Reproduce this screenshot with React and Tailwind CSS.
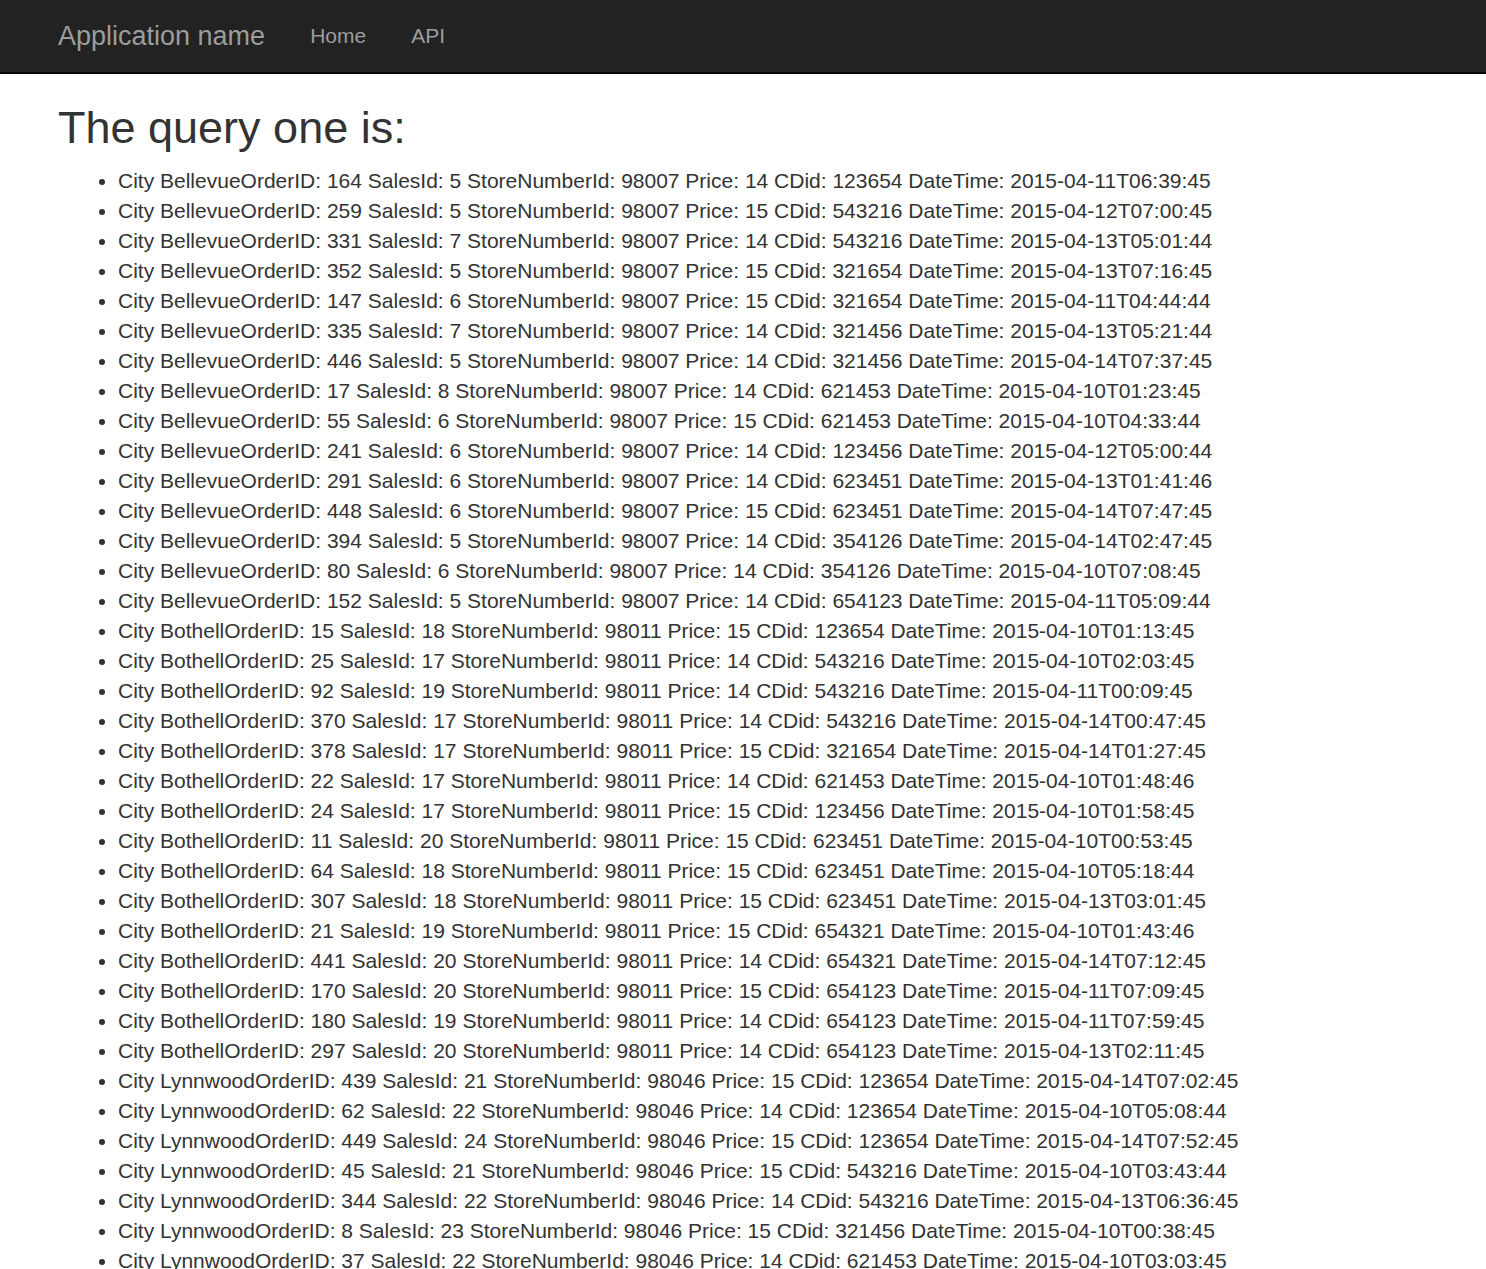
const rows = [
  ['Bellevue', 164, 5, 98007, 14, 123654, '2015-04-11T06:39:45'],
  ['Bellevue', 259, 5, 98007, 15, 543216, '2015-04-12T07:00:45'],
  ['Bellevue', 331, 7, 98007, 14, 543216, '2015-04-13T05:01:44'],
  ['Bellevue', 352, 5, 98007, 15, 321654, '2015-04-13T07:16:45'],
  ['Bellevue', 147, 6, 98007, 15, 321654, '2015-04-11T04:44:44'],
  ['Bellevue', 335, 7, 98007, 14, 321456, '2015-04-13T05:21:44'],
  ['Bellevue', 446, 5, 98007, 14, 321456, '2015-04-14T07:37:45'],
  ['Bellevue', 17, 8, 98007, 14, 621453, '2015-04-10T01:23:45'],
  ['Bellevue', 55, 6, 98007, 15, 621453, '2015-04-10T04:33:44'],
  ['Bellevue', 241, 6, 98007, 14, 123456, '2015-04-12T05:00:44'],
  ['Bellevue', 291, 6, 98007, 14, 623451, '2015-04-13T01:41:46'],
  ['Bellevue', 448, 6, 98007, 15, 623451, '2015-04-14T07:47:45'],
  ['Bellevue', 394, 5, 98007, 14, 354126, '2015-04-14T02:47:45'],
  ['Bellevue', 80, 6, 98007, 14, 354126, '2015-04-10T07:08:45'],
  ['Bellevue', 152, 5, 98007, 14, 654123, '2015-04-11T05:09:44'],
  ['Bothell', 15, 18, 98011, 15, 123654, '2015-04-10T01:13:45'],
  ['Bothell', 25, 17, 98011, 14, 543216, '2015-04-10T02:03:45'],
  ['Bothell', 92, 19, 98011, 14, 543216, '2015-04-11T00:09:45'],
  ['Bothell', 370, 17, 98011, 14, 543216, '2015-04-14T00:47:45'],
  ['Bothell', 378, 17, 98011, 15, 321654, '2015-04-14T01:27:45'],
  ['Bothell', 22, 17, 98011, 14, 621453, '2015-04-10T01:48:46'],
  ['Bothell', 24, 17, 98011, 15, 123456, '2015-04-10T01:58:45'],
  ['Bothell', 11, 20, 98011, 15, 623451, '2015-04-10T00:53:45'],
  ['Bothell', 64, 18, 98011, 15, 623451, '2015-04-10T05:18:44'],
  ['Bothell', 307, 18, 98011, 15, 623451, '2015-04-13T03:01:45'],
  ['Bothell', 21, 19, 98011, 15, 654321, '2015-04-10T01:43:46'],
  ['Bothell', 441, 20, 98011, 14, 654321, '2015-04-14T07:12:45'],
  ['Bothell', 170, 20, 98011, 15, 654123, '2015-04-11T07:09:45'],
  ['Bothell', 180, 19, 98011, 14, 654123, '2015-04-11T07:59:45'],
  ['Bothell', 297, 20, 98011, 14, 654123, '2015-04-13T02:11:45'],
  ['Lynnwood', 439, 21, 98046, 15, 123654, '2015-04-14T07:02:45'],
  ['Lynnwood', 62, 22, 98046, 14, 123654, '2015-04-10T05:08:44'],
  ['Lynnwood', 449, 24, 98046, 15, 123654, '2015-04-14T07:52:45'],
  ['Lynnwood', 45, 21, 98046, 15, 543216, '2015-04-10T03:43:44'],
  ['Lynnwood', 344, 22, 98046, 14, 543216, '2015-04-13T06:36:45'],
  ['Lynnwood', 8, 23, 98046, 15, 321456, '2015-04-10T00:38:45'],
  ['Lynnwood', 37, 22, 98046, 14, 621453, '2015-04-10T03:03:45'],
];

export default function App() {
  return (
    <div className="min-h-screen bg-white text-[#333] font-['Liberation_Sans',Arial,sans-serif]">
      <nav className="h-[74px] bg-[#222] border-b-2 border-[#080808] flex items-center pl-[58px]">
        <a className="text-[27px] leading-[30px] text-[#9d9d9d] mr-[45px]">Application name</a>
        <a className="text-[21px] leading-[30px] text-[#9d9d9d] mr-[45px]">Home</a>
        <a className="text-[21px] leading-[30px] text-[#9d9d9d]">API</a>
      </nav>

      <div className="px-[58px]">
        <h2 className="mt-[29px] mb-[13px] text-[45px] leading-[1.1] font-normal">The query one is:</h2>
        <ul className="list-disc pl-[60px] text-[21px] leading-[30px]">
          {rows.map((r, i) => (
            <li key={i}>
              City {r[0]}OrderID: {r[1]} SalesId: {r[2]} StoreNumberId: {r[3]} Price: {r[4]} CDid: {r[5]} DateTime: {r[6]}
            </li>
          ))}
        </ul>
      </div>
    </div>
  );
}
